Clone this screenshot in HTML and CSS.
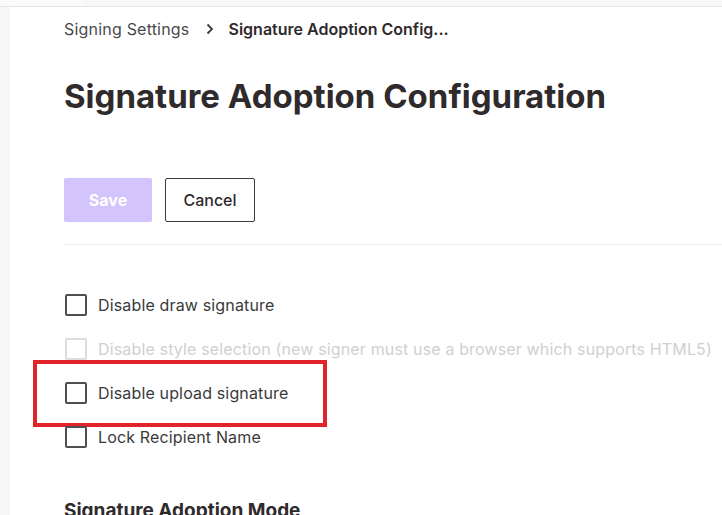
FILE: index.html
```html
<!DOCTYPE html>
<html lang="en">
<head>
<meta charset="utf-8">
<title>Signature Adoption Configuration</title>
<link rel="stylesheet" href="styles.css">
</head>
<body>
<div class="topbar"><div class="topbar-left"></div></div>
<div class="layout">
  <aside class="sidebar"></aside>
  <main class="main">
    <nav class="breadcrumb">
      <span class="crumb">Signing Settings</span>
      <svg class="chev" width="10" height="12" viewBox="0 0 10 12"><path d="M2.5 1.5 L7 6 L2.5 10.5" fill="none" stroke="#3a3a3a" stroke-width="1.8"/></svg>
      <span class="crumb current">Signature Adoption Config...</span>
    </nav>
    <h1 class="title">Signature Adoption Configuration</h1>
    <div class="actions">
      <button class="btn btn-primary" disabled>Save</button>
      <button class="btn btn-secondary">Cancel</button>
    </div>
    <hr class="divider">
    <ul class="options">
      <li class="option"><span class="box"></span><span class="label">Disable draw signature</span></li>
      <li class="option disabled"><span class="box"></span><span class="label">Disable style selection (new signer must use a browser which supports HTML5)</span></li>
      <li class="option highlighted"><span class="box"></span><span class="label">Disable upload signature</span><span class="highlight"></span></li>
      <li class="option"><span class="box"></span><span class="label">Lock Recipient Name</span></li>
    </ul>
    <h2 class="section">Signature Adoption Mode</h2>
  </main>
</div>
</body>
</html>
```
FILE: styles.css
```css
* { box-sizing: border-box; }
html, body { margin: 0; padding: 0; background: #ffffff; overflow: hidden; }
body {
  font-family: Inter, "Liberation Sans", sans-serif;
  color: #2f2a2c;
  height: 515px;
}
.topbar {
  height: 7px;
  background: #f7f7f7;
  border-bottom: 1px solid #e6e6e6;
  display: flex;
}
.topbar-left { width: 85px; background: #fafafa; }
.layout { display: flex; height: 508px; }
.sidebar { width: 10px; background: #f6f6f6; flex: none; }
.main { flex: 1; padding: 10px 0 0 54px; }
.breadcrumb {
  display: flex; align-items: center;
  font-size: 16px; line-height: 24px; height: 24px;
}
.crumb { color: #4a4a4a; letter-spacing: 0.2px; }
.chev { margin: 0 14px 0 15px; }
.crumb.current { color: #2f2a2c; font-weight: 600; letter-spacing: 0; }
.title {
  margin: 35px 0 0 0;
  font-size: 33px; line-height: 40px; font-weight: 700;
  letter-spacing: 0;
  color: #2f2a2c;
}
.actions { display: flex; gap: 13px; margin-top: 62px; }
.btn {
  height: 44px; font-family: inherit; font-size: 16px;
  border-radius: 2px; padding: 0; cursor: pointer;
}
.btn-primary {
  width: 88px; background: #d3c4fb; color: #ffffff; border: none; font-weight: 700;
}
.btn-secondary {
  width: 90px; background: #ffffff; color: #2f2a2c; border: 1px solid #3c3c3c; font-weight: 500;
}
.divider { border: 0; border-top: 1px solid #f0f0f0; margin: 22px 0 0 0; }
.options { list-style: none; margin: 38px 0 0 0; padding: 0; }
.option {
  position: relative;
  display: flex; align-items: center; gap: 11px;
  height: 44px; margin-left: 1px;
  font-size: 16px; color: #3a3a3a; letter-spacing: 0.15px;
}
.box {
  width: 22px; height: 22px; border: 2px solid #4f4f4f; border-radius: 2px; flex: none;
}
.option.disabled { color: #d0d0d0; }
.option.disabled .box { border-color: #dcdcdc; }
.highlight {
  position: absolute; left: -32px; top: -11px; width: 294px; height: 67px;
  border: 4px solid #e0242a;
}
.section {
  margin: 40px 0 0 0; font-size: 19px; font-weight: 700; line-height: 24px; color: #2f2a2c;
}
```
